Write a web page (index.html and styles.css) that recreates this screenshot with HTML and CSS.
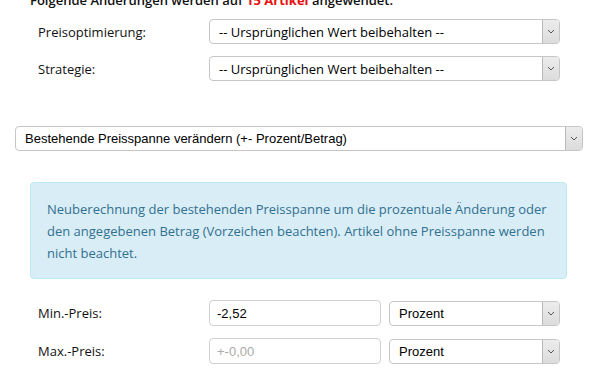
FILE: index.html
```html
<!DOCTYPE html>
<html lang="de">
<head>
<meta charset="UTF-8">
<title>Massenänderung Preise</title>
<link rel="stylesheet" href="styles.css">
</head>
<body>
  <p class="intro">Folgende Änderungen werden auf <span class="count">15 Artikel</span> angewendet.</p>

  <div class="form-row">
    <label class="label">Preisoptimierung:</label>
    <div class="select wide">
      <span class="select-text soft">-- Ursprünglichen Wert beibehalten --</span>
      <span class="select-arrow"><svg width="8" height="5" viewBox="0 0 8 5"><path d="M1 1 L4 4 L7 1" fill="none" stroke="#555" stroke-width="1"/></svg></span>
    </div>
  </div>

  <div class="form-row">
    <label class="label">Strategie:</label>
    <div class="select wide">
      <span class="select-text soft">-- Ursprünglichen Wert beibehalten --</span>
      <span class="select-arrow"><svg width="8" height="5" viewBox="0 0 8 5"><path d="M1 1 L4 4 L7 1" fill="none" stroke="#555" stroke-width="1"/></svg></span>
    </div>
  </div>

  <div class="mode">
    <div class="select full">
      <span class="select-text">Bestehende Preisspanne verändern (+- Prozent/Betrag)</span>
      <span class="select-arrow"><svg width="8" height="5" viewBox="0 0 8 5"><path d="M1 1 L4 4 L7 1" fill="none" stroke="#555" stroke-width="1"/></svg></span>
    </div>
  </div>

  <div class="info">
    Neuberechnung der bestehenden Preisspanne um die prozentuale Änderung oder
    den angegebenen Betrag (Vorzeichen beachten). Artikel ohne Preisspanne werden
    nicht beachtet.
  </div>

  <div class="form-row">
    <label class="label">Min.-Preis:</label>
    <input class="input" type="text" value="-2,52">
    <div class="select half">
      <span class="select-text">Prozent</span>
      <span class="select-arrow"><svg width="8" height="5" viewBox="0 0 8 5"><path d="M1 1 L4 4 L7 1" fill="none" stroke="#555" stroke-width="1"/></svg></span>
    </div>
  </div>

  <div class="form-row">
    <label class="label">Max.-Preis:</label>
    <input class="input" type="text" placeholder="+-0,00">
    <div class="select half">
      <span class="select-text">Prozent</span>
      <span class="select-arrow"><svg width="8" height="5" viewBox="0 0 8 5"><path d="M1 1 L4 4 L7 1" fill="none" stroke="#555" stroke-width="1"/></svg></span>
    </div>
  </div>
</body>
</html>
```

FILE: styles.css
```css
body {
  margin: 0;
  font-family: 'Open Sans', 'Noto Sans', sans-serif;
  font-size: 13px;
  color: #111;
  background: #fff;
}

.intro {
  margin: -8px 0 11px 30px;
  height: 16px;
  line-height: 16px;
  font-weight: 600;
}

.count {
  color: #e8110f;
  font-weight: bold;
}

.form-row {
  display: flex;
  align-items: center;
  gap: 8px;
  padding-left: 38px;
  margin-bottom: 12px;
}

.label {
  width: 163px;
}

.select {
  display: flex;
  align-items: stretch;
  height: 25px;
  box-sizing: border-box;
  border: 1px solid #c6c6c6;
  border-radius: 4px;
  background: #fff;
  overflow: hidden;
}

.select.wide {
  width: 351px;
}

.select.half {
  width: 171px;
}

.select.full {
  width: 568px;
}

.select-text {
  flex: 1;
  display: flex;
  align-items: center;
  padding-left: 9px;
  font-family: 'Liberation Sans', Arial, sans-serif;
  font-size: 13px;
  color: #000;
  white-space: nowrap;
}

.select-text.soft {
  font-family: 'Open Sans', 'Noto Sans', sans-serif;
}

.select-arrow {
  width: 16px;
  display: flex;
  align-items: center;
  justify-content: center;
  border-left: 1px solid #b9b9b9;
  background: linear-gradient(#ececec, #dcdcdc);
}

.mode {
  padding: 33px 0 31px 15px;
}

.info {
  margin: 0 31px 21px 30px;
  padding: 15px 16px 14px;
  border: 1px solid #bce8f1;
  border-radius: 4px;
  background: #d9edf7;
  color: #31708f;
  line-height: 22px;
}

.input {
  width: 172px;
  height: 26px;
  box-sizing: border-box;
  margin: 0;
  padding: 0 7px;
  border: 1px solid #d0d0d0;
  border-radius: 4px;
  font-family: 'Liberation Sans', Arial, sans-serif;
  font-size: 13px;
  color: #000;
}

.input::placeholder {
  color: #aaa;
}
```
